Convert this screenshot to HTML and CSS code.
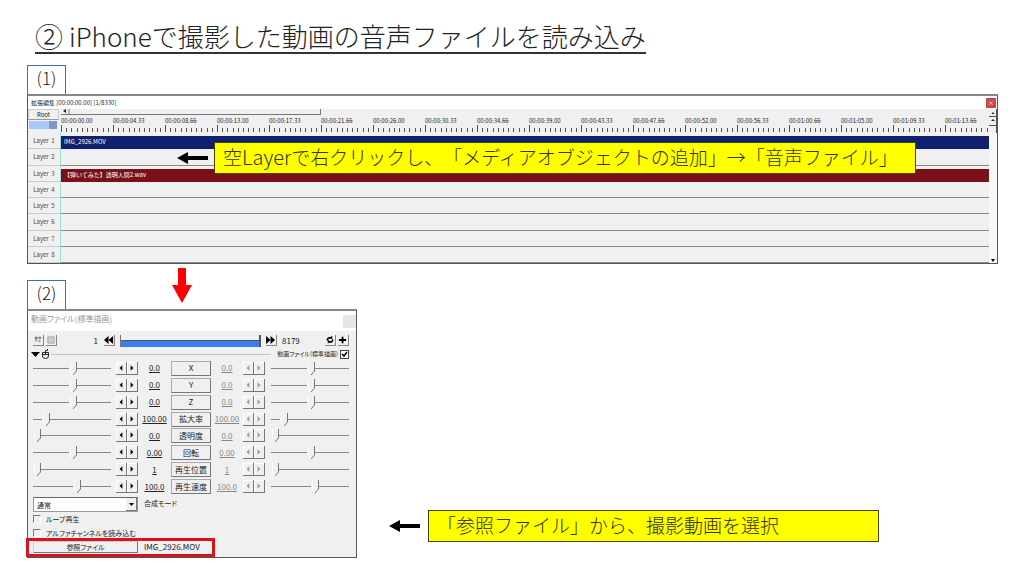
FILE: index.html
```html
<!DOCTYPE html>
<html lang="ja">
<head>
<meta charset="utf-8">
<meta name="viewport" content="width=device-width, initial-scale=1">
<title>iPhoneで撮影した動画の音声ファイルを読み込み</title>
<link rel="stylesheet" href="styles.css">
</head>
<body>
<svg class="defs" aria-hidden="true">
  <symbol id="prev" viewBox="0 0 11 12"><path d="M7 3v6L4 6z"/></symbol>
  <symbol id="next" viewBox="0 0 11 12"><path d="M4 3v6l3-3z"/></symbol>
  <symbol id="arrow-left" viewBox="0 0 31 12"><path d="M0 6 11 0v4h20v4H11v4z"/></symbol>
</svg>
<main class="slide">
  <h1 class="heading"><span class="heading-no">②</span> iPhoneで撮影した動画の音声ファイルを読み込み</h1>

  <section class="step">
    <h2 class="tag">(1)</h2>
    <div class="timeline">
      <div class="timeline-title"><span>拡張編集 [00:00:00.00] [1/8330]</span><button class="close" aria-label="閉じる">×</button></div>
      <div class="timeline-head">
        <div class="root">
          <button class="root-btn">Root</button>
          <div class="zoom-bar"><span class="zoom-fill"></span></div>
        </div>
        <div class="ruler">
          <div class="range"><svg class="range-icon" viewBox="0 0 9 5"><path d="M5 0v4L2 2z" fill="#222"/><path d="M8 0v5" stroke="#777"/></svg></div>
          <div class="times">
            <span>00:00:00.00</span><span>00:00:04.33</span><span>00:00:08.66</span><span>00:00:13.00</span><span>00:00:17.33</span><span>00:00:21.66</span><span>00:00:26.00</span><span>00:00:30.33</span><span>00:00:34.66</span><span>00:00:39.00</span><span>00:00:43.33</span><span>00:00:47.66</span><span>00:00:52.00</span><span>00:00:56.33</span><span>00:01:00.66</span><span>00:01:05.00</span><span>00:01:09.33</span><span>00:01:13.66</span>
          </div>
          <svg class="ticks" aria-hidden="true">
            <defs><pattern id="tick" width="52" height="7" patternUnits="userSpaceOnUse"><path d="M.5 0v7M5.5 3v4M10.5 3v4M16.5 3v4M21.5 3v4M26.5 3v4M31.5 3v4M36.5 3v4M42.5 3v4M47.5 3v4" stroke="#555"/></pattern></defs>
            <rect width="100%" height="7" fill="url(#tick)"/>
          </svg>
        </div>
        <div class="head-scroll">
          <svg viewBox="0 0 8 25"><path d="M2.500 5 4 3l1.500 2zM2 12l2-2 2 2z" fill="#222"/><path d="M0 7.500h7M0 16.500h7M7.500 0v25" stroke="#555" fill="none"/></svg>
        </div>
      </div>
      <div class="timeline-body">
        <div class="layers">
          <div class="layer"><span class="layer-name">Layer&nbsp; 1</span><div class="track"><div class="clip clip-video">IMG_2926.MOV</div></div></div>
          <div class="layer"><span class="layer-name">Layer&nbsp; 2</span><div class="track"></div></div>
          <div class="layer"><span class="layer-name">Layer&nbsp; 3</span><div class="track"><div class="clip clip-audio">【弾いてみた】透明人間2.wav</div></div></div>
          <div class="layer"><span class="layer-name">Layer&nbsp; 4</span><div class="track"></div></div>
          <div class="layer"><span class="layer-name">Layer&nbsp; 5</span><div class="track"></div></div>
          <div class="layer"><span class="layer-name">Layer&nbsp; 6</span><div class="track"></div></div>
          <div class="layer"><span class="layer-name">Layer&nbsp; 7</span><div class="track"></div></div>
          <div class="layer"><span class="layer-name">Layer&nbsp; 8</span><div class="track"></div></div>
        </div>
        <div class="body-scroll"><svg viewBox="0 0 8 6"><path d="M2 2h4L4 5z"/></svg></div>
      </div>
      <div class="callout">
        <svg class="arrow"><use href="#arrow-left"/></svg>
        <p class="note note-layer">空<span class="note-latin">Layer</span>で右クリックし、「メディアオブジェクトの追加」→「音声ファイル」</p>
      </div>
    </div>
  </section>

  <svg class="arrow-down" viewBox="0 0 20 35"><path d="M6 0h8v17h6L10 35 0 17h6z" fill="#f00"/></svg>

  <section class="step">
    <h2 class="tag">(2)</h2>
    <div class="step-row">
      <div class="dialog">
        <div class="dialog-title"><span>動画ファイル(標準描画)</span><button class="dialog-close" aria-label="閉じる"></button></div>
        <div class="dialog-body">
          <div class="seek">
            <button class="mini" aria-label="カメラ"><svg viewBox="0 0 11 11"><path d="M2 2h3v3H2zM6 2h3v2H6zM2 6h4v1H2zM7 5h1v3H7z" fill="#777"/></svg></button>
            <button class="mini" aria-label="クリップ"><svg viewBox="0 0 11 11"><path d="M2 2h7v7H2z" fill="#ccc" stroke="#aaa"/></svg></button>
            <span class="seek-from">1</span>
            <button class="mini" aria-label="前へ"><svg viewBox="0 0 11 11"><path d="M5 1v9L0 5.500zM10 1v9L5 5.500z"/></svg></button>
            <div class="seek-bar"><div class="seek-fill"></div></div>
            <button class="mini" aria-label="次へ"><svg viewBox="0 0 11 11"><path d="M0 1v9l5-4.500zM5 1v9l5-4.500z"/></svg></button>
            <span class="seek-to">8179</span>
            <button class="mini" aria-label="更新"><svg viewBox="0 0 11 11"><path d="M4 3 8 1v4zM7 8 3 9V5z"/><path d="M2.500 6c0-3 2-3 3-3M8.500 5c0 3-2 3-3 3" fill="none" stroke="#000" stroke-width="1.500"/></svg></button>
            <button class="mini" aria-label="追加"><svg viewBox="0 0 11 11"><path d="M4 2h2v2.500h3v2H6V9H4V6.500H1v-2h3z"/></svg></button>
          </div>
          <div class="group">
            <svg class="group-icon" viewBox="0 0 20 12"><path d="M0 4h9L4.500 9z"/><path d="M11.500 4.500h6v3.500q0 2.500-3 2.500t-3-2.500zM11.500 6.500h6M14.500 6.500V2.500h2V1" fill="none" stroke="#222"/></svg>
            <span class="group-line"></span>
            <label class="group-label">動画ファイル(標準描画)<input class="check check-small" type="checkbox" checked></label>
          </div>
          <div class="params">
            <div class="param"><input class="slider" type="range" value="51" aria-label="X 開始"><span class="spin"><button aria-label="減"><svg><use href="#prev"/></svg></button><button aria-label="増"><svg><use href="#next"/></svg></button></span><span class="value">0.0</span><button class="param-btn">X</button><span class="value off">0.0</span><span class="spin off"><button aria-label="減"><svg><use href="#prev"/></svg></button><button aria-label="増"><svg><use href="#next"/></svg></button></span><input class="slider slider-end" type="range" value="51" aria-label="X 終了"></div>
            <div class="param"><input class="slider" type="range" value="51" aria-label="Y 開始"><span class="spin"><button aria-label="減"><svg><use href="#prev"/></svg></button><button aria-label="増"><svg><use href="#next"/></svg></button></span><span class="value">0.0</span><button class="param-btn">Y</button><span class="value off">0.0</span><span class="spin off"><button aria-label="減"><svg><use href="#prev"/></svg></button><button aria-label="増"><svg><use href="#next"/></svg></button></span><input class="slider slider-end" type="range" value="51" aria-label="Y 終了"></div>
            <div class="param"><input class="slider" type="range" value="51" aria-label="Z 開始"><span class="spin"><button aria-label="減"><svg><use href="#prev"/></svg></button><button aria-label="増"><svg><use href="#next"/></svg></button></span><span class="value">0.0</span><button class="param-btn">Z</button><span class="value off">0.0</span><span class="spin off"><button aria-label="減"><svg><use href="#prev"/></svg></button><button aria-label="増"><svg><use href="#next"/></svg></button></span><input class="slider slider-end" type="range" value="51" aria-label="Z 終了"></div>
            <div class="param"><input class="slider" type="range" value="13" aria-label="拡大率 開始"><span class="spin"><button aria-label="減"><svg><use href="#prev"/></svg></button><button aria-label="増"><svg><use href="#next"/></svg></button></span><span class="value">100.00</span><button class="param-btn">拡大率</button><span class="value off">100.00</span><span class="spin off"><button aria-label="減"><svg><use href="#prev"/></svg></button><button aria-label="増"><svg><use href="#next"/></svg></button></span><input class="slider slider-end" type="range" value="13" aria-label="拡大率 終了"></div>
            <div class="param"><input class="slider" type="range" value="0" aria-label="透明度 開始"><span class="spin"><button aria-label="減"><svg><use href="#prev"/></svg></button><button aria-label="増"><svg><use href="#next"/></svg></button></span><span class="value">0.0</span><button class="param-btn">透明度</button><span class="value off">0.0</span><span class="spin off"><button aria-label="減"><svg><use href="#prev"/></svg></button><button aria-label="増"><svg><use href="#next"/></svg></button></span><input class="slider slider-end" type="range" value="0" aria-label="透明度 終了"></div>
            <div class="param"><input class="slider" type="range" value="51" aria-label="回転 開始"><span class="spin"><button aria-label="減"><svg><use href="#prev"/></svg></button><button aria-label="増"><svg><use href="#next"/></svg></button></span><span class="value">0.00</span><button class="param-btn">回転</button><span class="value off">0.00</span><span class="spin off"><button aria-label="減"><svg><use href="#prev"/></svg></button><button aria-label="増"><svg><use href="#next"/></svg></button></span><input class="slider slider-end" type="range" value="51" aria-label="回転 終了"></div>
            <div class="param"><input class="slider" type="range" value="0" aria-label="再生位置 開始"><span class="spin"><button aria-label="減"><svg><use href="#prev"/></svg></button><button aria-label="増"><svg><use href="#next"/></svg></button></span><span class="value">1</span><button class="param-btn">再生位置</button><span class="value off">1</span><span class="spin off"><button aria-label="減"><svg><use href="#prev"/></svg></button><button aria-label="増"><svg><use href="#next"/></svg></button></span><input class="slider slider-end" type="range" value="0" aria-label="再生位置 終了"></div>
            <div class="param"><input class="slider" type="range" value="57" aria-label="再生速度 開始"><span class="spin"><button aria-label="減"><svg><use href="#prev"/></svg></button><button aria-label="増"><svg><use href="#next"/></svg></button></span><span class="value">100.0</span><button class="param-btn">再生速度</button><span class="value off">100.0</span><span class="spin off"><button aria-label="減"><svg><use href="#prev"/></svg></button><button aria-label="増"><svg><use href="#next"/></svg></button></span><input class="slider slider-end" type="range" value="57" aria-label="再生速度 終了"></div>
          </div>
          <div class="blend"><select class="select" id="blend"><option>通常</option></select><label for="blend">合成モード</label></div>
          <label class="option"><input class="check" type="checkbox">ループ再生</label>
          <label class="option"><input class="check" type="checkbox">アルファチャンネルを読み込む</label>
          <div class="file"><button class="file-btn">参照ファイル</button><span>IMG_2926.MOV</span></div>
        </div>
      </div>
      <div class="callout-file">
        <svg class="arrow"><use href="#arrow-left"/></svg>
        <p class="note note-file">「参照ファイル」から、撮影動画を選択</p>
      </div>
    </div>
  </section>
</main>
</body>
</html>
```
FILE: styles.css
```css
* { box-sizing: border-box; }

body {
  margin: 0;
  background: #fff;
  color: #222;
  font-family: "Noto Sans CJK JP", sans-serif;
  text-spacing-trim: space-all;
}

svg { display: block; }
button, input, select { margin: 0; font: inherit; color: inherit; }
button { padding: 0; border: 0; background: none; }
.defs { position: absolute; width: 0; height: 0; }

.slide { padding: 20px 26px 0 27px; }

.heading {
  display: flex;
  align-items: center;
  gap: 6px;
  width: fit-content;
  height: 34px;
  margin: 0 0 11px 8px;
  border-bottom: 2px solid #333;
  font-size: 26px;
  font-weight: 300;
  line-height: 36px;
  white-space: nowrap;
}
.heading-no { font-size: 28px; }

.step { display: flow-root; }

.tag {
  width: 39px;
  height: 29px;
  margin: 0;
  border: 1px solid #41719c;
  border-bottom: 0;
  font-size: 17px;
  font-weight: 300;
  line-height: 24px;
  text-align: center;
}

/* Timeline window */
.timeline {
  position: relative;
  border: 1px solid #555;
  border-top: 2px solid #888;
  background: #f0f0f0;
  font-size: 6px;
  line-height: 8px;
}
.timeline-title {
  display: flex;
  align-items: center;
  justify-content: space-between;
  height: 13px;
  padding: 0 1px 0 3px;
  background: #fff;
}
.close {
  width: 10px;
  height: 10px;
  background: #c9484f;
  color: #fff;
  line-height: 8px;
}
.timeline-head { display: flex; height: 24px; }
.root { width: 33px; padding-right: 2px; }
.root-btn {
  display: block;
  width: 100%;
  height: 11px;
  border: 1px solid #ccc;
  border-bottom-color: #999;
}
.zoom-bar { height: 8px; margin: 1px 2px 0 1px; background: #a9c8f5; }
.zoom-fill { display: block; width: 8px; height: 100%; margin-left: auto; background: #7d97c8; }
.ruler { flex: 1; min-width: 0; overflow: hidden; }
.range {
  width: 28%;
  height: 6px;
  border-right: 1px solid #777;
  border-bottom: 1px solid #777;
}
.range-icon { width: 9px; height: 5px; }
.times { display: flex; height: 10px; align-items: flex-end; }
.times span { flex: 0 0 52px; }
.ticks { width: 100%; height: 7px; }
.head-scroll { width: 8px; }
.timeline-body { display: flex; height: 130px; }
.layers { flex: 1; display: grid; grid-template-rows: repeat(8, 1fr); }
.layer { display: flex; min-height: 0; }
.layer-name {
  width: 33px;
  padding-top: 4px;
  border-right: 1px solid #9fdcdc;
  border-bottom: 1px solid #ccc;
  color: #444;
  text-align: center;
}
.track { flex: 1; border-bottom: 1px solid #888; }
.layer:first-child .track { border-bottom: 0; }
.clip {
  height: 13px;
  margin-top: 3px;
  padding-left: 3px;
  color: #fff;
  line-height: 12px;
}
.clip-video { background: #10206f; }
.clip-audio { background: #7b1019; }
.body-scroll { display: flex; align-items: flex-end; width: 8px; background: #f8f8f8; }
.body-scroll svg { width: 8px; height: 6px; }

.callout {
  position: absolute;
  top: 46px;
  left: 149px;
  display: flex;
  align-items: center;
  gap: 6px;
}
.arrow { flex: none; width: 31px; height: 12px; }
.note {
  margin: 0;
  height: 32px;
  padding: 0 8px;
  border: 1px solid #444400;
  background: #ff0;
  color: #333300;
  font-size: 19px;
  font-weight: 300;
  line-height: 28px;
  white-space: nowrap;
}
.note-layer { width: 702px; }
.note-latin { font-size: 20px; }

.arrow-down { width: 20px; height: 35px; margin: 4px 0 -23px 145px; }

/* Property dialog */
.step-row { display: flex; align-items: flex-end; gap: 32px; }
.dialog {
  width: 330px;
  border: 1px solid #555;
  border-top: 2px solid #888;
  background: #f0f0f0;
  font-size: 8px;
  line-height: 12px;
  font-feature-settings: "palt";
}
.dialog-title {
  display: flex;
  justify-content: space-between;
  height: 20px;
  padding: 2px 0 0 3px;
  background: #fff;
  color: #999;
}
.dialog-close { width: 13px; height: 13px; margin-top: 2px; background: #e6e6e6; }
.dialog-body { padding: 2px 7px 3px 5px; }
.seek { display: flex; align-items: center; height: 15px; }
.mini {
  width: 11px;
  height: 11px;
  margin-right: 2px;
  border-right: 1px solid #888;
  border-bottom: 1px solid #888;
}
.mini:last-child { margin-right: 0; }
.seek-from { width: 45px; padding-right: 6px; text-align: right; }
.seek-bar {
  flex: 1;
  height: 12px;
  margin: 0 5px 0 3px;
  padding-top: 5px;
  border-left: 1px solid #777;
  border-right: 2px solid #555;
}
.seek-fill { height: 7px; border-top: 1px solid #555; background: #3c7cec; }
.seek-to { width: 46px; padding-left: 3px; }
.group { display: flex; align-items: center; height: 12px; margin-left: -2px; }
.group-icon { width: 20px; height: 12px; }
.group-line { flex: 1; height: 1px; margin-right: 6px; background: #c4c4c4; }
.group-label { display: flex; align-items: center; gap: 2px; font-size: 6px; }

.params { display: grid; grid-template-rows: repeat(8, 1fr); height: 135px; }
.param {
  display: grid;
  grid-template-columns: 78px 27px 33px 40px 32px 22px 1fr;
  align-items: center;
}
.slider {
  appearance: none;
  width: 100%;
  height: 15px;
  background: linear-gradient(#888, #888) center / 100% 1px no-repeat;
}
.slider-end { width: auto; min-width: 0; margin-left: 6px; }
.slider::-webkit-slider-thumb {
  appearance: none;
  width: 8px;
  height: 15px;
  background: #f0f0f0 url("data:image/svg+xml,%3Csvg xmlns='http://www.w3.org/2000/svg' width='8' height='15'%3E%3Cpath d='M1.500 1v10l2 3' fill='none' stroke='%23fff'/%3E%3Cpath d='M7.500 1v9L4 14' fill='none' stroke='%23777'/%3E%3C/svg%3E");
}
.spin { display: flex; justify-content: flex-end; }
.spin button {
  width: 11px;
  height: 13px;
  border-right: 1px solid #777;
  border-bottom: 1px solid #777;
  box-shadow: inset 1px 1px #fff;
}
.spin svg { width: 10px; height: 12px; }
.spin.off svg { fill: #999; }
.value { text-align: center; text-decoration: underline; text-underline-offset: 1px; }
.value.off { color: #888; }
.param-btn {
  height: 15px;
  border: 1px solid #777;
  border-top-color: #aaa;
  border-left-color: #aaa;
  line-height: 12px;
  white-space: nowrap;
}
.blend { display: flex; align-items: flex-start; gap: 6px; margin-top: 2px; font-size: 7px; }
.select {
  appearance: none;
  width: 105px;
  height: 15px;
  padding: 0 3px;
  border: 1px solid #999;
  border-top-color: #666;
  border-radius: 0;
  background: #fff url("data:image/svg+xml,%3Csvg xmlns='http://www.w3.org/2000/svg' width='11' height='13'%3E%3Cpath d='M0 0h11v13H0z' fill='%23f0f0f0'/%3E%3Cpath d='M3 5h5L5.500 8z'/%3E%3Cpath d='M10.500 0v12.500H0' fill='none' stroke='%23777'/%3E%3C/svg%3E") right center no-repeat;
}
.option { display: flex; align-items: center; gap: 5px; height: 14px; font-size: 7px; }
.check {
  appearance: none;
  width: 8px;
  height: 8px;
  border: 1px solid #fff;
  border-top-color: #777;
  border-left-color: #777;
}
.check-small { width: 9px; height: 9px; border-color: #444; background: #fff; }
.check:checked {
  background: #fff url("data:image/svg+xml,%3Csvg xmlns='http://www.w3.org/2000/svg' viewBox='0 0 7 7'%3E%3Cpath d='M1 3l2 2 3-4' fill='none' stroke='%23000' stroke-width='1.500'/%3E%3C/svg%3E");
}
.file {
  position: relative;
  display: flex;
  align-items: center;
  gap: 6px;
  width: fit-content;
  height: 14px;
}
.file::after {
  content: "";
  position: absolute;
  inset: -2px -15px -3px -7px;
  border: 3px solid #d9141a;
}
.file-btn {
  width: 105px;
  height: 12px;
  border: 1px solid #777;
  border-top-color: #ccc;
  border-left-color: #ccc;
  font-size: 7px;
  line-height: 10px;
}
.callout-file { display: flex; align-items: center; gap: 8px; padding-bottom: 16px; }
.note-file { width: 451px; }
```
